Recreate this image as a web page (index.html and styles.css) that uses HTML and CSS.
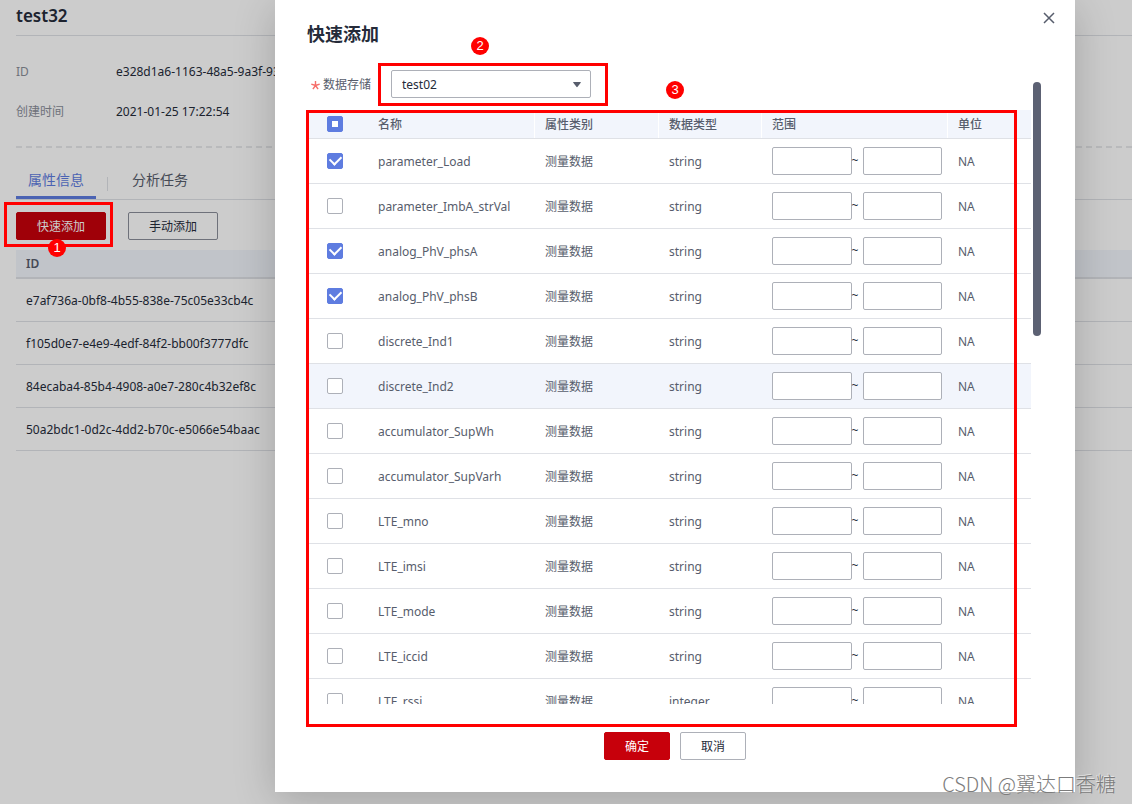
FILE: index.html
```html
<!DOCTYPE html>
<html lang="zh-CN">
<head>
<meta charset="utf-8">
<meta name="viewport" content="width=device-width, initial-scale=1">
<title>test32</title>
<link rel="stylesheet" href="styles.css">
</head>
<body>
<main class="page">
  <h1 class="page-title">test32</h1>
  <dl class="details">
    <dt>ID</dt><dd>e328d1a6-1163-48a5-9a3f-93</dd>
    <dt>创建时间</dt><dd>2021-01-25 17:22:54</dd>
  </dl>
  <nav class="tabs">
    <a class="tab tab-active" href="#attrs">属性信息</a>
    <span class="tab-divider"></span>
    <a class="tab" href="#tasks">分析任务</a>
  </nav>
  <div class="toolbar">
    <button class="btn btn-primary btn-wide" type="button">快速添加</button>
    <button class="btn btn-wide" type="button">手动添加</button>
  </div>
  <table class="id-table">
    <thead><tr><th>ID</th></tr></thead>
    <tbody>
      <tr><td>e7af736a-0bf8-4b55-838e-75c05e33cb4c</td></tr>
      <tr><td>f105d0e7-e4e9-4edf-84f2-bb00f3777dfc</td></tr>
      <tr><td>84ecaba4-85b4-4908-a0e7-280c4b32ef8c</td></tr>
      <tr><td>50a2bdc1-0d2c-4dd2-b70c-e5066e54baac</td></tr>
    </tbody>
  </table>
</main>

<div class="overlay">
  <section class="dialog" role="dialog" aria-labelledby="dialog-title">
    <header class="dialog-header">
      <h2 class="dialog-title" id="dialog-title">快速添加</h2>
      <button class="close" type="button" aria-label="关闭">
        <svg width="12" height="12" viewBox="0 0 12 12" fill="none" stroke="#575d6c" stroke-width="1.5"><path d="M1 1l10 10M11 1L1 11"/></svg>
      </button>
    </header>
    <div class="dialog-body">
      <div class="field">
        <label class="field-label" for="store"><svg class="star" width="9" height="9" viewBox="0 0 9 9" fill="none" stroke="#f66f6a" stroke-width="1.4"><path d="M4.500 0v4.500M.3 3.200l4.200 1.300M8.700 3.200L4.500 4.500M1.900 8.200l2.600-3.700M7.100 8.200L4.500 4.500"/></svg>数据存储</label>
        <div class="select-wrap">
          <select class="select" id="store"><option>test02</option></select>
          <svg class="caret" width="8" height="6" viewBox="0 0 8 6" fill="#575d6c"><path d="M.6 0h6.800q.8 0 .3.800L4.600 4.800q-.6.700-1.200 0L.3.800Q-.2 0 .6 0z"/></svg>
        </div>
      </div>
      <table class="attr-table">
        <colgroup><col class="c-check"><col class="c-name"><col class="c-kind"><col class="c-type"><col class="c-range"><col class="c-unit"></colgroup>
        <thead>
          <tr><th><input class="check check-partial" type="checkbox" aria-label="全选"></th><th>名称</th><th>属性类别</th><th>数据类型</th><th>范围</th><th>单位</th></tr>
        </thead>
        <tbody>
          <tr><td><input class="check" type="checkbox" id="a1" checked></td><td><label for="a1">parameter_Load</label></td><td>测量数据</td><td>string</td><td><div class="range"><input class="num" aria-label="最小值"><span>~</span><input class="num" aria-label="最大值"></div></td><td>NA</td></tr>
          <tr><td><input class="check" type="checkbox" id="a2"></td><td><label for="a2">parameter_ImbA_strVal</label></td><td>测量数据</td><td>string</td><td><div class="range"><input class="num" aria-label="最小值"><span>~</span><input class="num" aria-label="最大值"></div></td><td>NA</td></tr>
          <tr><td><input class="check" type="checkbox" id="a3" checked></td><td><label for="a3">analog_PhV_phsA</label></td><td>测量数据</td><td>string</td><td><div class="range"><input class="num" aria-label="最小值"><span>~</span><input class="num" aria-label="最大值"></div></td><td>NA</td></tr>
          <tr><td><input class="check" type="checkbox" id="a4" checked></td><td><label for="a4">analog_PhV_phsB</label></td><td>测量数据</td><td>string</td><td><div class="range"><input class="num" aria-label="最小值"><span>~</span><input class="num" aria-label="最大值"></div></td><td>NA</td></tr>
          <tr><td><input class="check" type="checkbox" id="a5"></td><td><label for="a5">discrete_Ind1</label></td><td>测量数据</td><td>string</td><td><div class="range"><input class="num" aria-label="最小值"><span>~</span><input class="num" aria-label="最大值"></div></td><td>NA</td></tr>
          <tr class="row-hover"><td><input class="check" type="checkbox" id="a6"></td><td><label for="a6">discrete_Ind2</label></td><td>测量数据</td><td>string</td><td><div class="range"><input class="num" aria-label="最小值"><span>~</span><input class="num" aria-label="最大值"></div></td><td>NA</td></tr>
          <tr><td><input class="check" type="checkbox" id="a7"></td><td><label for="a7">accumulator_SupWh</label></td><td>测量数据</td><td>string</td><td><div class="range"><input class="num" aria-label="最小值"><span>~</span><input class="num" aria-label="最大值"></div></td><td>NA</td></tr>
          <tr><td><input class="check" type="checkbox" id="a8"></td><td><label for="a8">accumulator_SupVarh</label></td><td>测量数据</td><td>string</td><td><div class="range"><input class="num" aria-label="最小值"><span>~</span><input class="num" aria-label="最大值"></div></td><td>NA</td></tr>
          <tr><td><input class="check" type="checkbox" id="a9"></td><td><label for="a9">LTE_mno</label></td><td>测量数据</td><td>string</td><td><div class="range"><input class="num" aria-label="最小值"><span>~</span><input class="num" aria-label="最大值"></div></td><td>NA</td></tr>
          <tr><td><input class="check" type="checkbox" id="a10"></td><td><label for="a10">LTE_imsi</label></td><td>测量数据</td><td>string</td><td><div class="range"><input class="num" aria-label="最小值"><span>~</span><input class="num" aria-label="最大值"></div></td><td>NA</td></tr>
          <tr><td><input class="check" type="checkbox" id="a11"></td><td><label for="a11">LTE_mode</label></td><td>测量数据</td><td>string</td><td><div class="range"><input class="num" aria-label="最小值"><span>~</span><input class="num" aria-label="最大值"></div></td><td>NA</td></tr>
          <tr><td><input class="check" type="checkbox" id="a12"></td><td><label for="a12">LTE_iccid</label></td><td>测量数据</td><td>string</td><td><div class="range"><input class="num" aria-label="最小值"><span>~</span><input class="num" aria-label="最大值"></div></td><td>NA</td></tr>
          <tr><td><input class="check" type="checkbox" id="a13"></td><td><label for="a13">LTE_rssi</label></td><td>测量数据</td><td>integer</td><td><div class="range"><input class="num" aria-label="最小值"><span>~</span><input class="num" aria-label="最大值"></div></td><td>NA</td></tr>
        </tbody>
      </table>
      <div class="scroll-thumb"></div>
    </div>
    <footer class="dialog-footer">
      <button class="btn btn-primary" type="button">确定</button>
      <button class="btn" type="button">取消</button>
    </footer>
  </section>
</div>

<div class="mark mark-add"></div>
<div class="mark mark-store"></div>
<div class="mark mark-table"></div>
<span class="step step-1">1</span>
<span class="step step-2">2</span>
<span class="step step-3">3</span>
<div class="watermark">CSDN @翼达口香糖</div>
</body>
</html>
```

FILE: styles.css
```css
* { box-sizing: border-box; }

body {
  margin: 0;
  height: 100vh;
  overflow: hidden;
  position: relative;
  background: #fff;
  color: #252b3a;
  font: 12px/18px "Noto Sans", "Noto Sans CJK SC", sans-serif;
}

button, input, select { font: inherit; color: inherit; margin: 0; }

/* Page */
.page { padding: 4px 0 0 16px; }
.page-title {
  margin: 0;
  padding-bottom: 7px;
  border-bottom: 1px solid #dfe1e6;
  font-size: 17px;
  font-weight: 600;
  line-height: 24px;
}
.details {
  display: grid;
  grid-template-columns: 100px 1fr;
  row-gap: 22px;
  margin: 0;
  padding: 27px 0 25px;
}
.details dt { color: #8a8e99; }
.details dd { margin: 0; }
.tabs {
  display: flex;
  align-items: center;
  height: 54px;
  padding-top: 14px;
  border-bottom: 1px solid #dfe1e6;
  background: repeating-linear-gradient(90deg, #e8e9ec 0 6px, transparent 6px 10px) top / 100% 2px no-repeat;
}
.tab {
  height: 39px;
  padding: 0 12px;
  border-bottom: 3px solid transparent;
  color: #575d6c;
  font-size: 14px;
  line-height: 40px;
  text-decoration: none;
}
.tab-active { color: #5e7ce0; border-bottom-color: #5e7ce0; }
.tab-divider { width: 1px; height: 14px; margin: 8px 12px 0 11px; background: #dfe1e6; }
.toolbar { display: flex; gap: 22px; padding: 12px 0 10px; }

.btn {
  height: 28px;
  min-width: 66px;
  padding: 2px 0 0;
  border: 1px solid #adb0b8;
  border-radius: 2px;
  background: transparent;
  line-height: 24px;
}
.btn-wide { min-width: 90px; border-color: #8a8e99; }
.btn-primary { border-color: #c7000b; background: #c7000b; color: #fff; }

.id-table { width: 100%; border-collapse: separate; border-spacing: 0; text-align: left; }
.id-table th {
  height: 29px;
  padding: 0 10px;
  border-bottom: 2px solid #dfe1e6;
  background: #f2f5fc;
  color: #575d6c;
  font-weight: 600;
}
.id-table td { height: 43px; padding: 2px 10px 0; border-bottom: 1px solid #dfe1e6; }

/* Dialog */
.overlay {
  position: absolute;
  inset: 0;
  padding: 0 57px 12px 275px;
  background: rgba(0, 0, 0, 0.2);
}
.dialog {
  display: flex;
  flex-direction: column;
  height: 100%;
  background: #fff;
  box-shadow: 0 8px 40px rgba(0, 0, 0, 0.2);
}
.dialog-header {
  display: flex;
  align-items: flex-start;
  justify-content: space-between;
  padding: 6px 14px 24px 32px;
}
.dialog-title { margin: 16px 0 0; font-size: 18px; font-weight: 700; line-height: 24px; }
.close {
  display: grid;
  place-items: center;
  width: 24px;
  height: 24px;
  padding: 0;
  border: 0;
  background: none;
}
.dialog-body {
  position: relative;
  flex: 1;
  min-height: 0;
  overflow: hidden;
  padding: 0 44px 0 32px;
}
.scroll-thumb {
  position: absolute;
  top: 12px;
  right: 34px;
  width: 8px;
  height: 40%;
  border-radius: 4px;
  background: #5c6173;
}
.field { display: flex; align-items: center; gap: 20px; padding: 0 0 12px 4px; }
.field-label { display: flex; align-items: center; gap: 3px; padding-top: 2px; color: #575d6c; }
.select-wrap { position: relative; width: 200px; }
.select {
  appearance: none;
  display: block;
  width: 100%;
  height: 28px;
  padding: 2px 24px 0 10px;
  border: 1px solid #adb0b8;
  border-radius: 2px;
  background: #fff;
}
.caret { position: absolute; right: 10px; top: 12px; }

.attr-table {
  width: 100%;
  table-layout: fixed;
  border-collapse: separate;
  border-spacing: 0;
  color: #575d6c;
  text-align: left;
}
.c-check { width: 61px; }
.c-name { width: 167px; }
.c-kind { width: 124px; }
.c-type { width: 103px; }
.c-range { width: 186px; }
.attr-table th {
  height: 29px;
  padding: 2px 10px 0;
  border-bottom: 1px solid #dfe1e6;
  background: linear-gradient(#fff, #fff) right / 1px 100% no-repeat #f2f5fc;
  font-weight: 500;
}
.attr-table th:first-child, .attr-table th:last-child { background: #f2f5fc; }
.attr-table td { height: 45px; padding: 2px 10px 0; border-bottom: 1px solid #dfe1e6; }
.attr-table th:first-child, .attr-table td:first-child { padding: 0 20px; }
.attr-table td:nth-child(5) { padding: 0 6px 0 10px; }
.row-hover td { background: #f2f5fc; }

.check {
  appearance: none;
  display: grid;
  place-items: center;
  width: 16px;
  height: 16px;
  border: 1px solid #adb0b8;
  border-radius: 2px;
  background: #fff;
}
.check:checked, .check-partial { border-color: #5e7ce0; background: #5e7ce0; }
.check:checked::after {
  content: "";
  width: 9px;
  height: 6px;
  margin-bottom: 4px;
  border: solid #fff;
  border-width: 0 0 2px 2px;
  transform: rotate(-45deg);
}
.check-partial::after { content: ""; width: 6px; height: 6px; background: #fff; }

.range { display: grid; grid-template-columns: 1fr 11px 1fr; color: #252b3a; line-height: 28px; }
.num {
  width: 100%;
  min-width: 0;
  height: 28px;
  border: 1px solid #adb0b8;
  border-radius: 2px;
  background: #fff;
}
.dialog-footer { display: flex; justify-content: center; gap: 10px; padding: 28px 0 32px; }

/* Callouts over the page */
.mark { position: absolute; border: 3px solid #f00; pointer-events: none; }
.mark-add { left: 4px; top: 202px; width: 109px; height: 45px; }
.mark-store { left: 378px; top: 63px; width: 230px; height: 43px; }
.mark-table { left: 306px; right: 115px; top: 110px; bottom: 77px; }
.step {
  position: absolute;
  width: 18px;
  height: 18px;
  border-radius: 50%;
  background: #f00;
  color: #fff;
  font: 13px/18px "Liberation Sans", sans-serif;
  text-align: center;
}
.step-1 { left: 48px; top: 239px; }
.step-2 { left: 471px; top: 37px; }
.step-3 { left: 666px; top: 81px; }
.watermark {
  position: absolute;
  right: 16px;
  bottom: 6px;
  color: #7c7c7c;
  font: 300 20px/28px "Noto Sans CJK SC", sans-serif;
  text-shadow: -1px -1px 0 rgba(255, 255, 255, 0.5);
}
```
